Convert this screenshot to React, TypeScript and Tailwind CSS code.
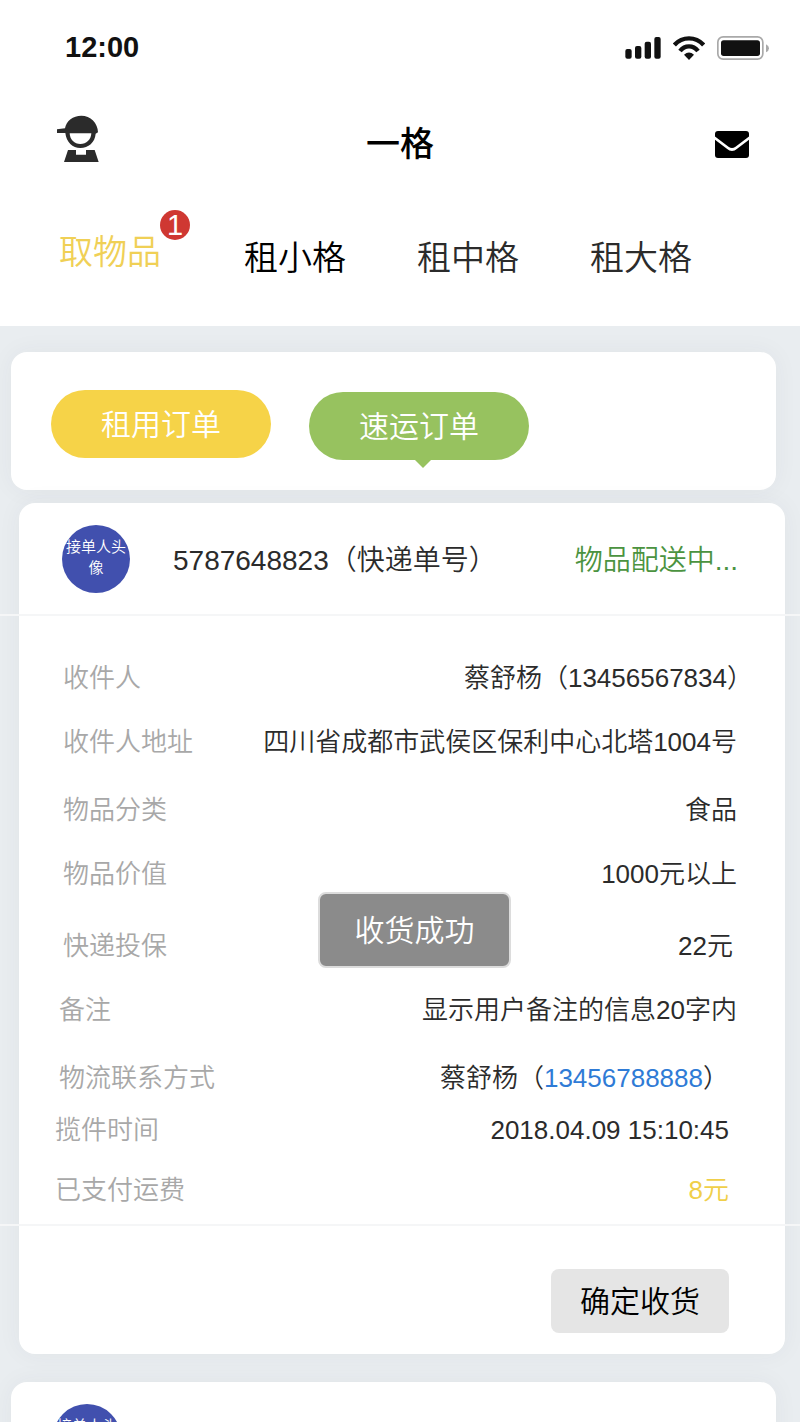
import type { ReactNode } from 'react';
import clsx from 'clsx';

interface Field {
  label: string;
  value: ReactNode;
  className: string;
}

const tabs = [
  { label: '租小格', className: 'text-black' },
  { label: '租中格', className: 'text-[#2b2b2b]' },
  { label: '租大格', className: 'text-[#2b2b2b]' },
];

const fields: Field[] = [
  { label: '收件人', value: '蔡舒杨（13456567834）', className: 'pl-11 pr-8' },
  { label: '收件人地址', value: '四川省成都市武侯区保利中心北塔1004号', className: 'mt-4 pl-11 pr-12' },
  { label: '物品分类', value: '食品', className: 'mt-5 pl-11 pr-12' },
  { label: '物品价值', value: '1000元以上', className: 'mt-4 pl-11 pr-12' },
  { label: '快递投保', value: '22元', className: 'mt-6 pl-11 pr-13' },
  { label: '备注', value: '显示用户备注的信息20字内', className: 'mt-4 pl-10 pr-12' },
  {
    label: '物流联系方式',
    value: (
      <>
        蔡舒杨（
        <a href="tel:13456788888" className="text-[#2f7bd6]">
          13456788888
        </a>
        ）
      </>
    ),
    className: 'mt-5 pl-10 pr-14',
  },
  { label: '揽件时间', value: '2018.04.09 15:10:45', className: 'mt-1 pl-9 pr-14' },
  {
    label: '已支付运费',
    value: <span className="text-[#f0cf4a]">8元</span>,
    className: 'mt-3 pl-9 pr-14',
  },
];

function StatusIcons() {
  return (
    <div className="flex items-center gap-3 text-[#111]">
      <svg width="36" height="22" viewBox="0 0 108 66" fill="currentColor" aria-hidden="true">
        <rect x="1" y="36" width="19" height="29" rx="6" />
        <rect x="30" y="27" width="19" height="38" rx="6" />
        <rect x="59" y="14" width="19" height="51" rx="6" />
        <rect x="88" y="0" width="19" height="65" rx="6" />
      </svg>
      <svg width="32" height="24" viewBox="0 0 96 72" fill="none" stroke="currentColor" strokeWidth="13" aria-hidden="true">
        <path d="M4 27 Q22 7 48 7 Q74 7 92 27" />
        <path d="M21 45 Q32 31 48 31 Q64 31 75 45" />
        <path d="M33 56 Q48 43 63 56 L48 72 Z" fill="currentColor" stroke="none" />
      </svg>
      <svg width="52" height="24" viewBox="0 0 156 72" aria-hidden="true">
        <rect x="2.5" y="2.5" width="135" height="67" rx="16" fill="none" stroke="#a9a9a9" strokeWidth="5" />
        <rect x="12" y="13" width="117" height="47" rx="8" fill="currentColor" />
        <path d="M147 25 Q156 29 156 37 Q156 45 147 49 Z" fill="#a9a9a9" />
      </svg>
    </div>
  );
}

function CourierIcon() {
  return (
    <svg width="42" height="48" viewBox="0 0 126 144" fill="#2b2b2b" aria-hidden="true">
      <path d="M0 43 L24 40 C28 17 48 2 73 2 C100 2 123 24 123 52 L116 56 C114 82 94 99 70 99 C47 99 28 82 25 54 L0 54 Z" />
      <path d="M38 55 H103 C102 75 88 87 70 87 C52 87 39 75 38 55 Z" fill="#fff" />
      <path d="M33 105 H57 V119 H87 V105 H113 L125 141 H21 Z" />
    </svg>
  );
}

function MailIcon() {
  return (
    <svg width="34" height="27" viewBox="0 0 102 81" aria-hidden="true">
      <rect width="102" height="81" rx="9" />
      <path d="M-3 19 L38 50 Q51 61 64 50 L105 19" fill="none" stroke="#fff" strokeWidth="8" />
    </svg>
  );
}

function Avatar() {
  return (
    <div className="flex size-[68px] shrink-0 items-center justify-center rounded-full bg-[#4150ae] pb-1 text-center text-[15px] leading-[21px] text-white">
      <span className="w-[62px]">接单人头像</span>
    </div>
  );
}

function Header() {
  return (
    <header className="shrink-0 bg-white pb-[42px]">
      <div className="flex h-24 items-center justify-between pr-[31px] pl-[65px]">
        <span className="text-[29px] font-bold text-[#111]">12:00</span>
        <StatusIcons />
      </div>
      <div className="grid h-24 grid-cols-[1fr_auto_1fr] items-center px-[51px]">
        <button type="button" aria-label="我的" className="justify-self-start pb-2.5 pl-1.5">
          <CourierIcon />
        </button>
        <h1 className="text-[34px] leading-none font-medium text-black">一格</h1>
        <button type="button" aria-label="消息" className="justify-self-end">
          <MailIcon />
        </button>
      </div>
      <nav className="flex items-end gap-[71px] pt-[34px] pl-[59px] text-[34px] leading-[52px]">
        <button type="button" className="relative mb-1.5 pr-3 text-[#f0d056]">
          取物品
          <span className="absolute -top-4 left-[101px] flex size-[30px] items-center justify-center rounded-full bg-[#cf3832] text-[29px] leading-none text-white">
            1
          </span>
        </button>
        {tabs.map((tab) => (
          <button key={tab.label} type="button" className={tab.className}>
            {tab.label}
          </button>
        ))}
      </nav>
    </header>
  );
}

export default function App() {
  return (
    <div className="flex h-screen flex-col bg-[#e9edf0] font-['Liberation_Sans','Noto_Sans_CJK_SC',sans-serif] font-[350] text-[#2b2b2b]">
      <Header />

      <main className="relative flex-1 overflow-y-auto pt-[26px] [scrollbar-width:none]">
        <section className="mr-6 ml-[11px] flex items-end gap-[38px] rounded-2xl bg-white pt-[38px] pb-[30px] pl-10 text-[30px] text-white shadow-[0_0_24px_rgba(60,50,80,0.05)]">
          <button type="button" className="mb-0.5 h-[68px] w-[220px] rounded-full bg-[#f6d348]">
            租用订单
          </button>
          <button type="button" className="relative h-[68px] w-[220px] rounded-full bg-[#97c25f]">
            速运订单
            <span className="absolute top-full left-[106px] border-x-8 border-t-8 border-x-transparent border-t-[#97c25f]" />
          </button>
        </section>

        <article className="relative mt-[13px] mr-[15px] ml-[19px] rounded-2xl bg-white shadow-[0_0_24px_rgba(60,50,80,0.05)]">
          <div className="flex h-[111px] items-center gap-[43px] pr-[47px] pl-[43px] text-[28px]">
            <Avatar />
            <div className="flex flex-1 items-center justify-between pt-1">
              <h2>5787648823（快递单号）</h2>
              <span className="text-[#4b9340]">物品配送中...</span>
            </div>
          </div>

          <dl className="-mr-[15px] -ml-[19px] border-y-2 border-[#f5f6f7] pt-[38px] pr-[15px] pb-[10px] pl-[19px] text-[26px]">
            {fields.map((field) => (
              <div key={field.label} className={clsx('flex h-12 items-center justify-between', field.className)}>
                <dt className="text-[#a8a8a8]">{field.label}</dt>
                <dd>{field.value}</dd>
              </div>
            ))}
          </dl>

          <div className="flex justify-end pt-[43px] pr-14 pb-[21px]">
            <button type="button" className="h-16 w-[178px] rounded-lg bg-[#e5e5e5] text-[30px] text-black">
              确定收货
            </button>
          </div>

          <div
            role="status"
            className="absolute top-[389px] left-[299px] flex h-[76px] w-[193px] items-center justify-center rounded-lg border-2 border-[#dcdcdc] bg-[#8b8b8b] text-[30px] text-white"
          >
            收货成功
          </div>
        </article>

        <article className="mt-7 mr-6 ml-[11px] rounded-2xl bg-white shadow-[0_0_24px_rgba(60,50,80,0.05)]">
          <div className="flex h-[111px] items-center pl-[42px]">
            <Avatar />
          </div>
        </article>
      </main>
    </div>
  );
}
